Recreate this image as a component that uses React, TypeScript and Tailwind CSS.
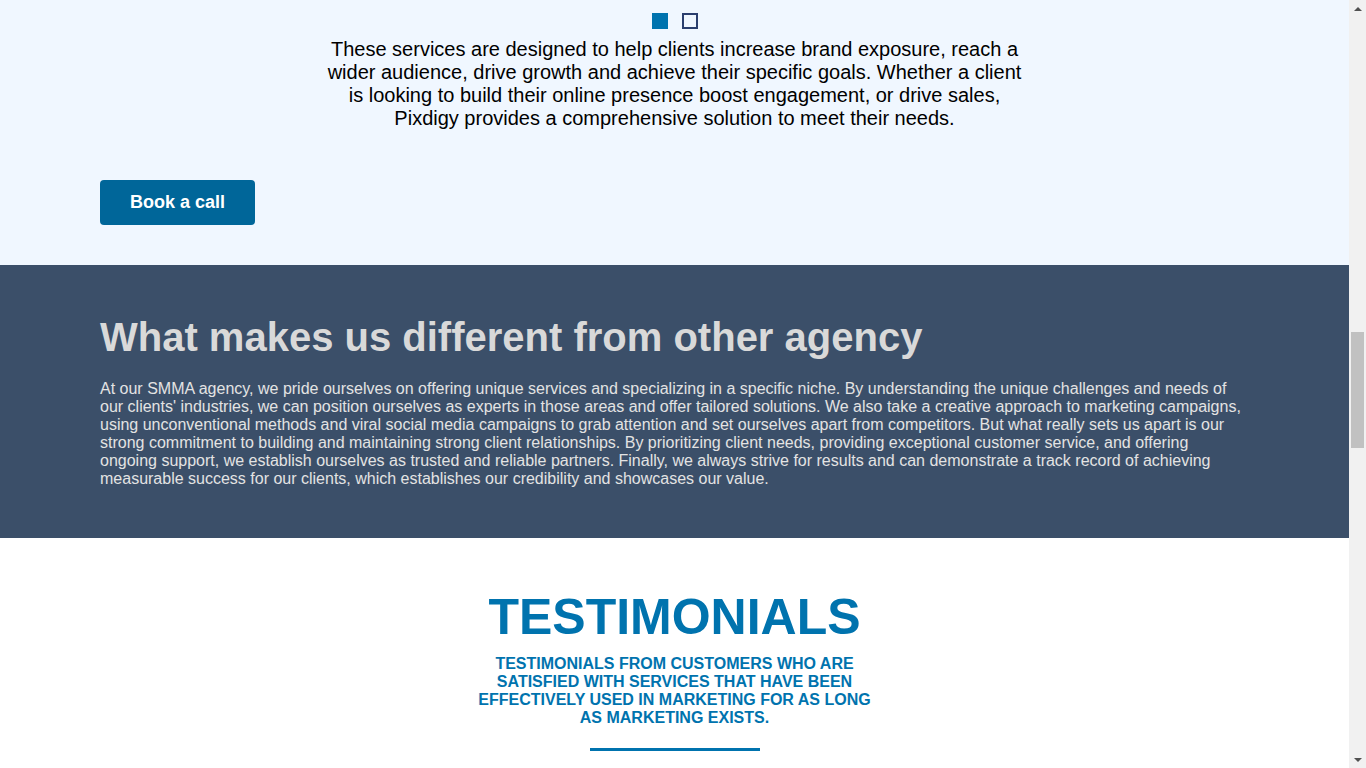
function Scrollbar() {
  return (
    <aside className="flex h-screen w-[17px] shrink-0 flex-col items-center bg-[#f1f1f1]">
      <div className="flex h-[17px] w-full items-center justify-center pt-[1px]">
        <svg width="8" height="4" viewBox="0 0 8 4">
          <path d="M0 4 L4 0 L8 4 Z" fill="#505050" />
        </svg>
      </div>
      <div className="mt-[315px] h-[116px] w-[13px] bg-[#c1c1c1]" />
      <div className="flex-1" />
      <div className="flex h-[17px] w-full items-center justify-center">
        <svg width="8" height="4" viewBox="0 0 8 4">
          <path d="M0 0 L8 0 L4 4 Z" fill="#505050" />
        </svg>
      </div>
    </aside>
  );
}

export default function App() {
  return (
    <div className="flex h-screen overflow-hidden bg-white font-['Liberation_Sans',Arial,sans-serif]">
      <main className="w-[1349px] shrink-0 overflow-hidden">
        <section className="bg-[#f0f7ff] px-[100px] pt-[13px] pb-[40px]">
          <div className="flex justify-center gap-[14px]">
            <span className="h-4 w-4 bg-[#0073ae]" />
            <span className="h-4 w-4 border-2 border-[#2b3f6e]" />
          </div>
          <p className="mx-auto mt-[9px] w-[700px] text-center text-[20px] leading-[23px] text-black">
            These services are designed to help clients increase brand exposure, reach a wider audience, drive growth
            and achieve their specific goals. Whether a client is looking to build their online presence boost
            engagement, or drive sales, Pixdigy provides a comprehensive solution to meet their needs.
          </p>
          <button className="mt-[50px] h-[45px] w-[155px] rounded bg-[#006699] text-[18px] font-bold text-white">
            Book a call
          </button>
        </section>

        <section className="bg-[#3b4f69] px-[100px] pt-[49px] pb-[50px]">
          <h2 className="text-[40px] font-bold leading-[46px] text-[#d9d9d9]">
            What makes us different from other agency
          </h2>
          <p className="mt-[20px] text-[16px] leading-[18px] text-[#e3e3e3]">
            At our SMMA agency, we pride ourselves on offering unique services and specializing in a specific niche. By
            understanding the unique challenges and needs of our clients' industries, we can position ourselves as
            experts in those areas and offer tailored solutions. We also take a creative approach to marketing
            campaigns, using unconventional methods and viral social media campaigns to grab attention and set ourselves
            apart from competitors. But what really sets us apart is our strong commitment to building and maintaining
            strong client relationships. By prioritizing client needs, providing exceptional customer service, and
            offering ongoing support, we establish ourselves as trusted and reliable partners. Finally, we always strive
            for results and can demonstrate a track record of achieving measurable success for our clients, which
            establishes our credibility and showcases our value.
          </p>
        </section>

        <section className="flex flex-col items-center bg-white px-[100px] pt-[51px] pb-[60px]">
          <h2 className="text-[50px] font-bold leading-[57px] text-[#0073ae]">TESTIMONIALS</h2>
          <p className="mt-[9px] w-[400px] text-center text-[16px] font-bold uppercase leading-[18px] text-[#0073ae]">
            Testimonials from customers who are satisfied with services that have been effectively used in marketing
            for as long as marketing exists.
          </p>
          <div className="mt-[21px] h-[3px] w-[170px] bg-[#0073ae]" />
        </section>
      </main>
      <Scrollbar />
    </div>
  );
}
